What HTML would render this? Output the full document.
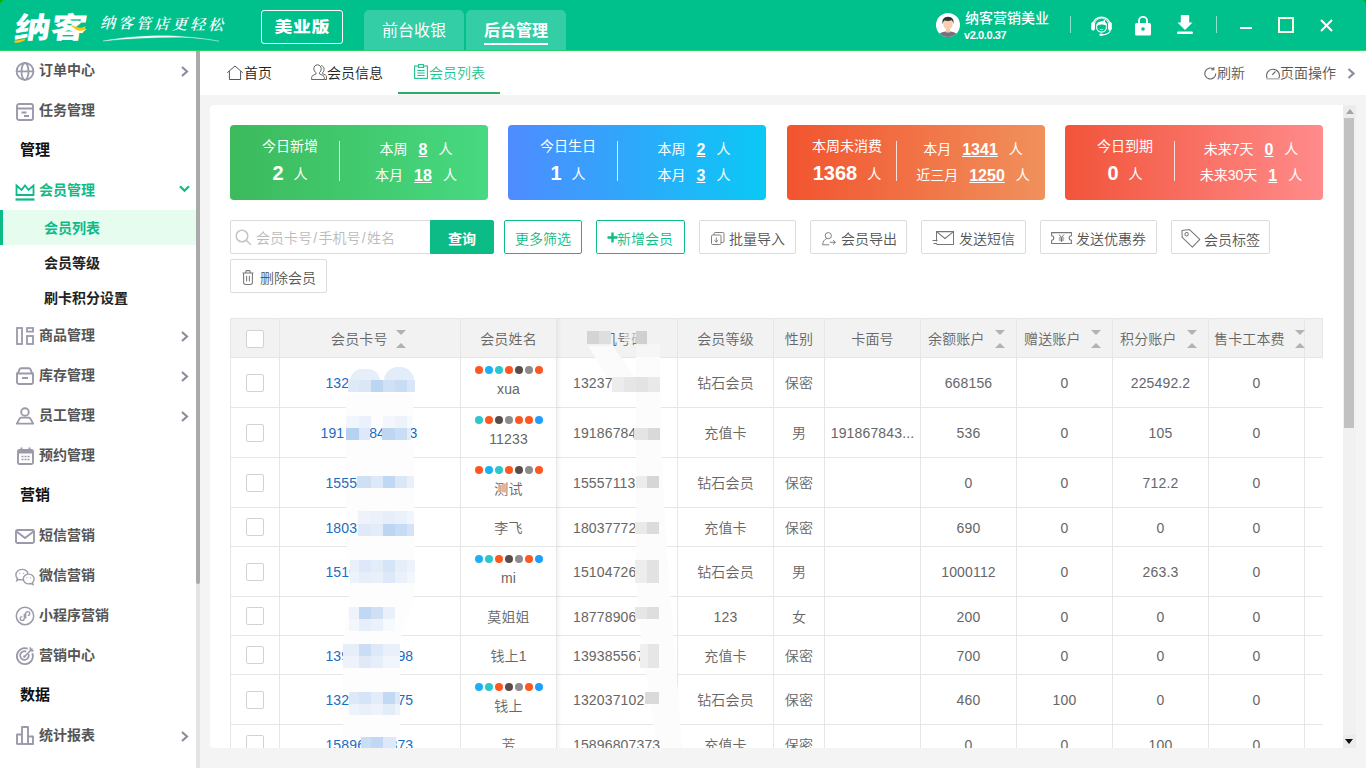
<!DOCTYPE html>
<html lang="zh-CN">
<head>
<meta charset="utf-8">
<title>纳客 - 会员列表</title>
<style>
*{box-sizing:border-box;margin:0;padding:0}
html,body{width:1366px;height:768px;overflow:hidden;background:#f4f4f4}
body{font-family:"Liberation Sans","Noto Sans CJK SC",sans-serif;font-size:14px;color:#666;position:relative;font-weight:350}
.abs{position:absolute}
svg{display:block;overflow:visible}
/* ---------- header ---------- */
#hd{position:absolute;z-index:5;left:0;top:0;width:1366px;height:51px;border-radius:5px 5px 0 0;background:#00c08c;border-bottom:1px solid #2bd06a}
#logo{position:absolute;left:15px;top:8px;width:58px;font-size:29px;line-height:40px;font-weight:900;color:#fff;letter-spacing:0;transform:scaleX(1.24) skewX(-7deg);transform-origin:0 50%;white-space:nowrap}
#slogan{position:absolute;left:100px;top:11px;font-size:15px;line-height:24px;color:#fff;font-style:italic;letter-spacing:3px;font-family:"Liberation Serif","Noto Serif CJK SC",serif;font-weight:600;transform:rotate(1deg);transform-origin:0 50%}
#ver{position:absolute;left:261px;top:10px;width:82px;height:34px;border:1px solid #fff;border-radius:3px;color:#fff;font-size:15px;font-weight:900;line-height:31px;text-align:center}
#ver b{display:inline-block;font-weight:900;transform:scaleX(1.190);letter-spacing:.5px}
.ttab{position:absolute;top:10px;height:40px;background:#33cda6;border-radius:5px 5px 0 0;color:#fff;font-size:16px;line-height:41px;text-align:center;font-weight:400}
#uname{position:absolute;left:965px;top:9px;color:#fff;font-size:14px;line-height:18px;font-weight:500}
#uver{position:absolute;left:964px;top:28px;color:#fff;font-size:11px;line-height:14px;letter-spacing:-0.4px;font-weight:700}
.vsep{position:absolute;top:16px;width:1px;height:17px;background:rgba(255,255,255,.55)}
/* ---------- sidebar ---------- */
#sb{position:absolute;left:0;top:50px;width:196px;height:718px;background:#fff;overflow:hidden}
#sbtrack{position:absolute;left:196px;top:51px;width:4px;height:717px;background:#e4e4e4}
#sbthumb{position:absolute;left:196px;top:51px;width:4px;height:533px;background:#aaa;border-radius:0 0 2px 2px}
.mi{position:absolute;left:0;width:196px;height:40px;line-height:40px;font-size:14px;font-weight:700;color:#555}
.mi .t{position:absolute;left:39px;top:0}
.mi svg.ic{position:absolute;left:15px;top:10px;transform:translateY(1px)}
.mi svg.ar{position:absolute;left:180px;top:16px}
.mh{position:absolute;left:20px;height:40px;line-height:40px;font-size:15px;font-weight:700;color:#111}
.si{position:absolute;left:0;width:196px;height:35px;line-height:37px;font-size:14px;font-weight:700;color:#222;padding-left:44px}
.si.on{background:#e6fcee;color:#0dbb86;border-left:3px solid #0dbb86;padding-left:41px}
/* ---------- tab bar ---------- */
#tb{position:absolute;left:200px;top:51px;width:1166px;height:44px;background:#fff}
.pt{position:absolute;top:0;height:44px;line-height:45px;font-size:14px;color:#222;white-space:nowrap}
.pt svg{position:absolute}
/* ---------- panel ---------- */
#pn{position:absolute;left:210px;top:105px;width:1146px;height:643px;background:#fff;border-radius:4px 0 0 4px;overflow:hidden}


/* ---------- cards ---------- */
.cd{position:absolute;top:20px;width:258px;height:75px;border-radius:4px;color:#fff;font-size:14px;font-weight:400}
.cd .l{position:absolute;left:0;width:120px;text-align:center;white-space:nowrap}
.cd .r{position:absolute;left:126px;width:120px;text-align:center;white-space:nowrap}
.cd .dv{position:absolute;left:109px;top:16px;width:1px;height:40px;background:rgba(255,255,255,.8)}
.cd b.n{font-size:20px;font-weight:700;margin-right:10px;vertical-align:-1px}
.cd b.u{font-size:16px;font-weight:700;text-decoration:underline;margin:0 11px;vertical-align:-1px}
/* ---------- toolbar ---------- */
.bt{position:absolute;height:34px;border:1px solid #dcdcdc;border-radius:2px;background:#fff;color:#555;font-size:14px;line-height:34px;white-space:nowrap}
.bt span{position:absolute;top:1px}
.bt u{text-decoration:none;padding:0 1.300px}
.bt svg{position:absolute}
.bt.g{border-color:#0dbb86;color:#0dbb86}
/* ---------- table ---------- */
.vl{position:absolute;width:1px;background:#e6e6e6}
.hl{position:absolute;height:1px;background:#e6e6e6}
.c{position:absolute;text-align:center;font-size:14px;color:#666;white-space:nowrap;line-height:20px;height:20px;letter-spacing:.150px}
.c.b{color:#1a6dc2}
.ck{position:absolute;left:36px;width:18px;height:18px;border:1px solid #d2d2d2;border-radius:2px;background:#fff}
.dots{position:absolute;left:265px;width:68px;height:8px}
.dots i{position:absolute;top:0;width:8px;height:8px;border-radius:50%}
.so{position:absolute;width:10px;height:18px}
.so:before,.so:after{content:"";position:absolute;left:0;border:5px solid transparent}
.so:before{top:0;border-top-color:#b2b2b2;border-bottom-width:0}
.so:after{top:13px;border-bottom-color:#b2b2b2;border-top-width:0}
.mz{position:absolute}

</style>
</head>
<body>
<i class="abs" style="left:0;top:0;width:6px;height:6px;background:#00b400;z-index:4"></i><i class="abs" style="left:1360px;top:0;width:6px;height:6px;background:#00b400;z-index:4"></i>
<div id="hd">
  <div id="logo">纳客</div>
  <div id="slogan">纳客管店更轻松</div>
  <svg class="abs" style="left:12px;top:20px" width="80" height="26" viewBox="0 0 80 26"><path d="M2.500 20.500c4 .2 8-1 11-2.500l-1.200 2.800c-3 1.400-6.500 2.300-9.800 2z" fill="#ffc20e"/><path d="M58 5c4 .2 6.500 2.600 10 2.700 2 0 4-.6 5.500-1.500l-.5 3.500c-2 1-4 1.300-6 1-3.500-.5-5.500-3.500-9-5.700z" fill="#ffc20e"/></svg>
  <svg class="abs" style="left:102px;top:34px" width="120" height="9" viewBox="0 0 120 9"><path d="M1 7C25 2.500 55 1 75 2.200 92 3.300 105 5 117 7.200 100 4.300 90 3.400 75 3.300 50 3.300 25 4.500 1 7z" fill="#fff" stroke="#fff" stroke-width=".3"/></svg>
  <div id="ver"><b>美业版</b></div>
  <div class="ttab" style="left:364px;width:100px">前台收银</div>
  <div class="ttab" style="left:466px;width:100px;font-weight:700">后台管理<i class="abs" style="left:18px;top:33px;width:64px;height:2px;background:#fff"></i></div>
  <div id="uname">纳客营销美业</div>
  <div id="uver">v2.0.0.37</div>
  <svg class="abs" style="left:936px;top:13px" width="24" height="24" viewBox="0 0 24 24"><defs><clipPath id="avc"><circle cx="12" cy="12" r="12"/></clipPath></defs><circle cx="12" cy="12" r="12" fill="#fff"/><g clip-path="url(#avc)"><path d="M2.500 24c0-4 3.500-5.600 9.500-5.600s9.500 1.600 9.500 5.600z" fill="#77707f"/><rect x="10" y="15" width="4" height="4.500" fill="#f2c6a5"/><ellipse cx="12" cy="11.200" rx="4.700" ry="5.400" fill="#f7cfb0"/><path d="M6.600 11.200c-.9-4.600 1.300-7.400 5.400-7.400 4.300 0 6.200 2.800 5.400 7.400-.3-2-1-3.300-1.800-3.900-1.900.7-5 .8-7 .100-.900.700-1.700 1.900-2 3.800z" fill="#333"/></g></svg>
  <svg class="abs" style="left:1091px;top:14px" width="21" height="22" viewBox="0 0 21 22" fill="none" stroke="#fff"><path d="M1.600 11A9 9.300 0 0 1 19.400 11" stroke-width="1.300"/><path d="M3.300 10.500A7.300 7.600 0 0 1 17.700 10.500" stroke-width=".9" opacity=".9"/><rect x="0.200" y="8" width="3.700" height="8.400" rx="1.700" fill="#fff" stroke="none"/><rect x="17.100" y="8" width="3.700" height="8.400" rx="1.700" fill="#fff" stroke="none"/><path d="M5.100 13c-.3-3.400 1.700-5.400 5-5.600 1.500-.1 2.900-.7 3.900-1.900.4 1 .3 1.800-.1 2.500 1.500.8 2.300 2.400 2.100 4.700-1.300-1.900-3.300-2.500-5.700-2.200-2.200.3-4.100 1-5.200 2.500z" fill="#fff" stroke="none"/><path d="M5.500 12.600c0 3.300 2.100 5.600 5 5.600s5-2.300 5-5.600" stroke-width="1.200"/><path d="M8.800 15.300q1.700 1 3.400 0" stroke-width=".9"/><path d="M19.200 15.800c0 2.700-2.900 4.600-7.400 5" stroke-width="1.200"/><ellipse cx="10.200" cy="20.700" rx="1.900" ry="1.200" fill="#fff" stroke="none"/></svg>
  <svg class="abs" style="left:1135px;top:15px" width="16" height="21" viewBox="0 0 16 21"><path d="M4 9V5.800a4 4 0 0 1 8 0V9" fill="none" stroke="#fff" stroke-width="1.800"/><path d="M1.500 8h13a1.500 1.500 0 0 1 1.500 1.500v9.500a1.500 1.500 0 0 1-1.500 1.500h-13A1.500 1.500 0 0 1 0 19V9.500A1.500 1.500 0 0 1 1.500 8z" fill="#fff"/><circle cx="8" cy="14" r="1.800" fill="#00c08c"/></svg>
  <svg class="abs" style="left:1177px;top:15px" width="16" height="19" viewBox="0 0 16 19" fill="#fff"><path d="M4.600 0h6.800a.8.800 0 0 1 .8.800V7.500h3.300L8 15 .5 7.500h3.300V.8A.8.800 0 0 1 4.600 0z"/><rect x="0" y="16.600" width="16" height="2.400" rx="1.200"/></svg>
  <i class="abs" style="left:1240px;top:27px;width:12px;height:2px;background:#fff"></i>
  <i class="abs" style="left:1278px;top:17px;width:16px;height:16px;border:2px solid #ffffe0"></i>
  <svg class="abs" style="left:1320px;top:19px" width="13" height="13" viewBox="0 0 13 13" stroke="#fff" stroke-width="2" fill="none"><path d="M1 1l11 11M12 1L1 12"/></svg>
  <i class="vsep" style="left:1070px"></i>
  <i class="vsep" style="left:1216px"></i>
</div>

<div id="sb">
  <div class="mi" style="top:0">
    <svg class="ic" style="left:15px;top:10px" width="20" height="20" viewBox="0 0 20 20" fill="none" stroke="#9a9aab" stroke-width="1.8"><circle cx="10" cy="10.400" r="8.400"/><ellipse cx="10" cy="10.400" rx="3.500" ry="8.400"/><path d="M1.600 10.400h16.800"/></svg>
    <span class="t">订单中心</span>
    <svg class="ar" width="9" height="11" viewBox="0 0 9 11" fill="none" stroke="#8c8c9c" stroke-width="2.200"><path d="M2 1l5 4.5L2 10"/></svg>
  </div>
  <div class="mi" style="top:40px">
    <svg class="ic" style="left:16px;top:12px" width="18" height="18" viewBox="0 0 18 18" fill="none" stroke="#9a9aab" stroke-width="1.9"><rect x="1" y="1" width="16" height="16" rx="2"/><path d="M1 5.5h16M5.5 9.5h5M8 13h5" /></svg>
    <span class="t">任务管理</span>
  </div>
  <div class="mh" style="top:80px">管理</div>
  <div class="mi" style="top:120px;color:#0dbb86">
    <svg class="ic" style="left:15px;top:13px" width="20" height="17" viewBox="0 0 20 17" fill="none" stroke="#0dbb86" stroke-width="1.8"><path d="M1.5 1.5l5 4.5L10 1.5 13.5 6l5-4.5V11h-17z" stroke-linejoin="miter"/><path d="M0.5 15.5h19" stroke-width="2.2"/></svg>
    <span class="t">会员管理</span>
    <svg class="ar" style="left:179px;top:15px" width="11" height="8" viewBox="0 0 11 8" fill="none" stroke="#0dbb86" stroke-width="2.2"><path d="M1 1.2l4.5 4.6L10 1.2"/></svg>
  </div>
  <div class="si on" style="top:160px">会员列表</div>
  <div class="si" style="top:195px">会员等级</div>
  <div class="si" style="top:230px">刷卡积分设置</div>
  <div class="mi" style="top:265px">
    <svg class="ic" style="left:16px;top:11px" width="18" height="18" viewBox="0 0 18 18" fill="none" stroke="#9a9aab" stroke-width="1.8"><rect x="1" y="1" width="5" height="16"/><rect x="11" y="1" width="6" height="3.6"/><rect x="11" y="9" width="6" height="8"/></svg>
    <span class="t">商品管理</span>
    <svg class="ar" width="9" height="11" viewBox="0 0 9 11" fill="none" stroke="#8c8c9c" stroke-width="2.200"><path d="M2 1l5 4.5L2 10"/></svg>
  </div>
  <div class="mi" style="top:305px">
    <svg class="ic" style="left:16px;top:11px" width="18" height="18" viewBox="0 0 18 18" fill="none" stroke="#9a9aab" stroke-width="1.9"><path d="M1 6.5h16v8.5a2 2 0 0 1-2 2H3a2 2 0 0 1-2-2z"/><path d="M2 6.2l1.6-4a1.6 1.6 0 0 1 1.5-1h7.8a1.6 1.6 0 0 1 1.5 1l1.6 4"/><path d="M6 11h6" stroke-width="2"/></svg>
    <span class="t">库存管理</span>
    <svg class="ar" width="9" height="11" viewBox="0 0 9 11" fill="none" stroke="#8c8c9c" stroke-width="2.200"><path d="M2 1l5 4.5L2 10"/></svg>
  </div>
  <div class="mi" style="top:345px">
    <svg class="ic" style="left:16px;top:11px" width="18" height="18" viewBox="0 0 18 18" fill="none" stroke="#9a9aab" stroke-width="1.9"><circle cx="9" cy="5" r="3.8"/><path d="M0.8 16.6l3-5.2a1.6 1.6 0 0 1 1.4-.8h7.6a1.6 1.6 0 0 1 1.4.8l3 5.2z" stroke-linejoin="round"/></svg>
    <span class="t">员工管理</span>
    <svg class="ar" width="9" height="11" viewBox="0 0 9 11" fill="none" stroke="#8c8c9c" stroke-width="2.200"><path d="M2 1l5 4.5L2 10"/></svg>
  </div>
  <div class="mi" style="top:385px">
    <svg class="ic" style="left:17px;top:11px" width="17" height="18" viewBox="0 0 17 18" fill="none" stroke="#9a9aab" stroke-width="1.9"><rect x="1" y="3" width="15" height="14" rx="1.5"/><path d="M1 5h15" stroke-width="3"/><path d="M4.5 0.5v3M12.500.5v3"/><path d="M4.500 9.500h2M7.500 9.500h2M10.500 9.500h2M4.500 12.500h2M7.500 12.500h2M10.500 12.500h2" stroke-width="1.6"/></svg>
    <span class="t">预约管理</span>
  </div>
  <div class="mh" style="top:425px">营销</div>
  <div class="mi" style="top:465px">
    <svg class="ic" style="left:15px;top:13px" width="20" height="15" viewBox="0 0 20 15" fill="none" stroke="#9a9aab" stroke-width="1.9"><rect x="1" y="1" width="18" height="13" rx="1.5"/><path d="M1.500 2.500L10 9l8.500-6.500"/></svg>
    <span class="t">短信营销</span>
  </div>
  <div class="mi" style="top:505px">
    <svg class="ic" style="left:15px;top:12px" width="20" height="17" viewBox="0 0 20 17" fill="none" stroke="#9a9aab" stroke-width="1.4"><path d="M8.200 11.800c-.5.100-1 .1-1.500.1-1 0-1.900-.2-2.700-.5L1.800 12.600l.6-2.100C1.500 9.600.9 8.400.9 7 .9 3.900 3.600 1.400 7 1.400c3 0 5.500 1.900 6 4.500"/><path d="M19.100 11c0-2.700-2.400-4.900-5.400-4.900S8.300 8.300 8.300 11s2.400 4.900 5.400 4.900c.8 0 1.500-.1 2.200-.4l2.100 1-.5-1.900c1-.9 1.600-2.100 1.600-3.600z" fill="#fff"/><circle cx="4.800" cy="5.300" r=".6" fill="#9a9aab" stroke="none"/><circle cx="8.600" cy="5.300" r=".6" fill="#9a9aab" stroke="none"/><circle cx="11.800" cy="9.800" r=".6" fill="#9a9aab" stroke="none"/><circle cx="15.400" cy="9.800" r=".6" fill="#9a9aab" stroke="none"/></svg>
    <span class="t">微信营销</span>
  </div>
  <div class="mi" style="top:545px">
    <svg class="ic" style="left:15px;top:10px" width="20" height="20" viewBox="0 0 20 20" fill="none" stroke="#9a9aab" stroke-width="1.5"><circle cx="10" cy="10" r="8.700"/><path d="M10.700 7.800c0-1.300 1-2.200 2.100-2.200s2 .8 2 1.900-.9 1.900-2 1.900M9.300 12.200c0 1.300-1 2.200-2.100 2.200s-2-.8-2-1.900.9-1.900 2-1.900M9.300 12.400V7.600M10.700 7.600v4.800" stroke-width="1.300"/></svg>
    <span class="t">小程序营销</span>
  </div>
  <div class="mi" style="top:585px">
    <svg class="ic" style="left:15px;top:9px" width="20" height="21" viewBox="0 0 20 21" fill="none" stroke="#9a9aab" stroke-width="1.800"><path d="M17.300 8.200a8 8 0 1 1-4.500-4.500"/><path d="M13.400 8.800a4.300 4.300 0 1 1-2.200-2.200"/><circle cx="9.400" cy="11.600" r="1.300" fill="#9a9aab" stroke="none"/><path d="M9.800 11.200L17.500 3.500M15.300 2.300v3.400h3.400" stroke-width="1.500"/></svg>
    <span class="t">营销中心</span>
  </div>
  <div class="mh" style="top:625px">数据</div>
  <div class="mi" style="top:665px">
    <svg class="ic" style="left:16px;top:10px" width="18" height="19" viewBox="0 0 18 19" fill="none" stroke="#9a9aab" stroke-width="1.900"><path d="M1 18V8.500h5V18M6 18V1h6v17M12 18v-7.500h5V18z" stroke-linejoin="round"/><path d="M0.500 18h17"/></svg>
    <span class="t">统计报表</span>
    <svg class="ar" width="9" height="11" viewBox="0 0 9 11" fill="none" stroke="#8c8c9c" stroke-width="2.200"><path d="M2 1l5 4.500L2 10"/></svg>
  </div>
  <div class="mi" style="top:706px;opacity:.55">
    <svg class="ic" style="left:16px;top:11px" width="18" height="18" viewBox="0 0 18 18" fill="none" stroke="#9a9aab" stroke-width="1.900"><rect x="1" y="1" width="16" height="16" rx="2"/></svg>
  </div>
</div>
<div id="sbtrack"></div><div id="sbthumb"></div>

<div id="tb">
  <div class="pt" style="left:27px">
    <svg style="left:0;top:13px" width="17" height="17" viewBox="0 0 17 17" fill="none" stroke="#555" stroke-width="1"><path d="M0.300 8.700L8 2l7.700 6.700M2.400 7.200V15.500h11.200V7.200"/></svg>
    <span style="margin-left:17px">首页</span>
  </div>
  <div class="pt" style="left:111px">
    <svg style="left:0;top:13px" width="16" height="17" viewBox="0 0 16 17" fill="none" stroke="#555" stroke-width=".9"><path d="M6.500 0.800c2.200 0 3.700 1.700 3.700 4 0 1.600-.7 3-1.800 3.800v1.200l3.600 1.700c.8.400 1.300 1.200 1.300 2.100v1.900H0.600v-1.900c0-.9.500-1.700 1.300-2.100l3.200-1.600V8.700C3.800 7.900 2.800 6.400 2.800 4.800c0-2.300 1.500-4 3.700-4z"/><path d="M10.300 1.600c1.700.3 2.800 1.800 2.800 3.700 0 1.400-.6 2.600-1.500 3.300v1l2.800 1.400c.7.300 1.100 1 1.100 1.800v2.700h-2"/></svg>
    <span style="margin-left:16px">会员信息</span>
  </div>
  <div class="pt" style="left:214px;color:#1fc38f">
    <svg style="left:0;top:13px" width="14" height="15" viewBox="0 0 14 15" fill="none" stroke="#1fc38f" stroke-width="1.100"><rect x="0.600" y="2" width="12.800" height="12.400"/><rect x="4.500" y="0.600" width="5" height="2.800" fill="#fff"/><path d="M3.300 6.500h7.400M3.300 9h7.400M3.300 11.500h7.400"/></svg>
    <span style="margin-left:15px">会员列表</span>
  </div>
  <i class="abs" style="left:198px;top:41px;width:102px;height:2px;background:#27b062"></i>
  <div class="pt" style="left:1004px;color:#555">
    <svg style="left:0;top:16px" width="13" height="13" viewBox="0 0 13 13" fill="none" stroke="#666" stroke-width="1.100"><path d="M11.800 6.500a5.500 5.500 0 1 1-2.200-4.400"/><path d="M9.800 0.300v2.500H7.300" /></svg>
    <span style="margin-left:13px">刷新</span>
  </div>
  <div class="pt" style="left:1066px;color:#555">
    <svg style="left:0;top:16px" width="14" height="13" viewBox="0 0 14 13" fill="none" stroke="#666" stroke-width="1.100"><path d="M1.200 11.300A6.400 6.400 0 1 1 12.800 11.300"/><path d="M0.500 11.800h13" stroke="#bbb" stroke-width="1.600"/><path d="M6.200 7.800l3.300-3.300"/></svg>
    <span style="margin-left:14px">页面操作</span>
  </div>
  <svg class="abs" style="left:1147px;top:17px" width="9" height="11" viewBox="0 0 9 11" fill="none" stroke="#8c8c9c" stroke-width="2.200"><path d="M1.500 1l5 4.500-5 4.500"/></svg>
</div>

<div id="pn">
<div class="cd" style="left:20px;background:linear-gradient(90deg,#3cba5c,#47d981)"><div class="l" style="top:11px;line-height:20px">今日新增</div><div class="l" style="top:34px;line-height:28px"><b class="n">2</b>人</div><i class="dv"></i><div class="r" style="top:13px;line-height:22px">本周<b class="u">8</b>人</div><div class="r" style="top:39px;line-height:22px">本月<b class="u">18</b>人</div></div>
<div class="cd" style="left:298px;background:linear-gradient(90deg,#4f8bff,#0ac9f5)"><div class="l" style="top:11px;line-height:20px">今日生日</div><div class="l" style="top:34px;line-height:28px"><b class="n">1</b>人</div><i class="dv"></i><div class="r" style="top:13px;line-height:22px">本周<b class="u">2</b>人</div><div class="r" style="top:39px;line-height:22px">本月<b class="u">3</b>人</div></div>
<div class="cd" style="left:577px;background:linear-gradient(90deg,#f2542f,#f0915c)"><div class="l" style="top:11px;line-height:20px">本周未消费</div><div class="l" style="top:34px;line-height:28px"><b class="n">1368</b>人</div><i class="dv"></i><div class="r" style="top:13px;line-height:22px">本月<b class="u">1341</b>人</div><div class="r" style="top:39px;line-height:22px">近三月<b class="u">1250</b>人</div></div>
<div class="cd" style="left:855px;background:linear-gradient(90deg,#f2543a,#ff8b8b)"><div class="l" style="top:11px;line-height:20px">今日到期</div><div class="l" style="top:34px;line-height:28px"><b class="n">0</b>人</div><i class="dv"></i><div class="r" style="top:13px;line-height:22px">未来7天<b class="u">0</b>人</div><div class="r" style="top:39px;line-height:22px">未来30天<b class="u">1</b>人</div></div>
<div class="bt" style="left:20px;top:115px;width:201px;border-radius:2px 0 0 2px;color:#bbb"><svg style="left:4px;top:8px" width="17" height="17" viewBox="0 0 17 17" fill="none" stroke="#c4c4c4" stroke-width="1.500"><circle cx="7" cy="7" r="5.800"/><path d="M11.200 11.200l4.600 4.600"/></svg><span style="left:25px;top:0">会员卡号<u>/</u>手机号<u>/</u>姓名</span></div>
<div class="bt" style="left:220px;top:115px;width:64px;border-color:#0dbb86;background:#0dbb86;color:#fff;font-weight:700;text-align:center;border-radius:0 2px 2px 0"><span style="left:17px">查询</span></div>
<div class="bt g" style="left:294px;top:115px;width:78px"><span style="left:10px">更多筛选</span></div>
<div class="bt g" style="left:386px;top:115px;width:89px"><svg style="left:10px;top:11px" width="11" height="11" viewBox="0 0 11 11" fill="none" stroke="#0dbb86" stroke-width="2.400"><path d="M5.500 0.500v10M0.500 5.500h10"/></svg><span style="left:20px">新增会员</span></div>
<div class="bt" style="left:489px;top:115px;width:97px"><svg style="left:11px;top:11px" width="14" height="14" viewBox="0 0 14 14" fill="none" stroke="#808080" stroke-width="1"><rect x="0.500" y="3" width="9.500" height="9.500" rx="1.200"/><path d="M3 3v-1.300a1.200 1.200 0 0 1 1.200-1.200h7.600a1.200 1.200 0 0 1 1.200 1.200v7.600a1.200 1.200 0 0 1-1.200 1.200h-1.800"/><path d="M5.250 5.500v4.500M3.300 8.200l1.950 1.900 1.950-1.900"/></svg><span style="left:29px">批量导入</span></div>
<div class="bt" style="left:600px;top:115px;width:97px"><svg style="left:11px;top:11px" width="15" height="14" viewBox="0 0 15 14" fill="none" stroke="#808080" stroke-width="1"><circle cx="6.300" cy="3.700" r="3.100"/><path d="M4.600 6.600c-2.300 1-3.800 3-4 6.200h6.600"/><path d="M7.800 10.300h5.600M11 8.100l2.400 2.200-2.400 2.200"/></svg><span style="left:30px">会员导出</span></div>
<div class="bt" style="left:711px;top:115px;width:105px"><svg style="left:10px;top:10px" width="22" height="14" viewBox="0 0 22 14" fill="none" stroke="#777" stroke-width="1.050"><path d="M4.500 10.500V0.600h17v12.800h-17"/><path d="M4.800 0.900l8.200 6.600 8.200-6.600"/><path d="M0.500 9.500h5M1.500 12.500h3.500"/></svg><span style="left:37px">发送短信</span></div>
<div class="bt" style="left:830px;top:115px;width:117px"><svg style="left:10px;top:11px" width="21" height="12" viewBox="0 0 21 12" fill="none" stroke="#777" stroke-width="1.050"><path d="M0.600 0.600h19.800v3.200a2.200 2.200 0 0 0 0 4.400v3.200H0.600V8.200a2.200 2.200 0 0 0 0-4.400z"/><path d="M8 2.500l2.500 3 2.500-3M10.500 5.500v4.500M7.800 6h5.400M7.800 8h5.400" stroke-width="1"/></svg><span style="left:35px">发送优惠券</span></div>
<div class="bt" style="left:961px;top:115px;width:99px"><svg style="left:9px;top:8px" width="20" height="19" viewBox="0 0 20 19" fill="none" stroke="#777" stroke-width="1.050"><path d="M1 1.500l7.500-.9 10.300 9.800-7.400 7.800L1.200 8.400z" stroke-linejoin="round"/><circle cx="5.600" cy="5.200" r="1.700"/></svg><span style="left:32px;top:2px">会员标签</span></div>
<div class="bt" style="left:20px;top:154px;width:97px"><svg style="left:11px;top:10px" width="12" height="15" viewBox="0 0 12 15" fill="none" stroke="#777" stroke-width="1.050"><path d="M0.500 3h11M3.800 2.800V1.600a1 1 0 0 1 1-1h2.400a1 1 0 0 1 1 1v1.200M1.600 3.200v9a2.200 2.200 0 0 0 2.200 2.200h4.400a2.200 2.200 0 0 0 2.200-2.200v-9M4.600 6v5.500M7.400 6v5.500"/></svg><span style="left:29px">删除会员</span></div>
<div class="abs" style="left:20px;top:213px;width:1093px;height:39px;background:#f2f2f2"></div>
<i class="hl" style="left:20px;top:213px;width:1093px"></i>
<i class="hl" style="left:20px;top:252px;width:1093px"></i>
<i class="hl" style="left:20px;top:302px;width:1093px"></i>
<i class="hl" style="left:20px;top:352px;width:1093px"></i>
<i class="hl" style="left:20px;top:402px;width:1093px"></i>
<i class="hl" style="left:20px;top:441px;width:1093px"></i>
<i class="hl" style="left:20px;top:491px;width:1093px"></i>
<i class="hl" style="left:20px;top:530px;width:1093px"></i>
<i class="hl" style="left:20px;top:569px;width:1093px"></i>
<i class="hl" style="left:20px;top:619px;width:1093px"></i>
<i class="vl" style="left:20px;top:213px;height:430px"></i>
<i class="vl" style="left:69px;top:213px;height:430px"></i>
<i class="vl" style="left:250px;top:213px;height:430px"></i>
<i class="vl" style="left:346px;top:213px;height:430px"></i>
<i class="vl" style="left:467px;top:213px;height:430px"></i>
<i class="vl" style="left:563px;top:213px;height:430px"></i>
<i class="vl" style="left:614px;top:213px;height:430px"></i>
<i class="vl" style="left:710px;top:213px;height:430px"></i>
<i class="vl" style="left:806px;top:213px;height:430px"></i>
<i class="vl" style="left:902px;top:213px;height:430px"></i>
<i class="vl" style="left:998px;top:213px;height:430px"></i>
<i class="vl" style="left:1094px;top:213px;height:430px"></i>
<i class="vl" style="left:1112px;top:213px;height:40px"></i>
<i class="abs" style="left:347px;top:213px;width:5px;height:430px;background:linear-gradient(90deg,rgba(0,0,0,.045),rgba(0,0,0,0))"></i>
<svg class="mz" style="left:0;top:0" width="1133" height="643"><polygon points="136,289 136,435 139,455 139,495 133,535 133,643 190,643 190,535 203,497 205,455 203,289" fill="#fdfdfe"/></svg>
<svg class="mz" style="left:0;top:0" width="1133" height="643"><polygon points="426,252 426,455 431,535 447,643 472,643 464,535 456,435 451,335 450,252" fill="#fcfcfc"/></svg>
<svg class="mz" style="left:0;top:0" width="1133" height="643"><polygon points="377,239 401,239 426,273 426,287 406,287" fill="#fbfbfb"/></svg>
<svg class="mz" style="left:0;top:0" width="1133" height="643"><polygon points="426,239 450,239 450,252 426,252" fill="#f6f6f6"/></svg>
<i class="ck" style="top:225px"></i>
<div class="c" style="left:121px;top:224px;width:56px">会员卡号</div>
<i class="so" style="left:186.2px;top:225px"></i>
<div class="c " style="left:251px;top:223.5px;width:95px">会员姓名</div>
<div class="c " style="left:347px;top:223.5px;width:120px">手机号码</div>
<div class="c " style="left:468px;top:223.5px;width:95px">会员等级</div>
<div class="c " style="left:564px;top:223.5px;width:50px">性别</div>
<div class="c " style="left:615px;top:223.5px;width:95px">卡面号</div>
<div class="c" style="left:718px;top:224px;width:56px">余额账户</div>
<i class="so" style="left:784.6px;top:225px"></i>
<div class="c" style="left:814px;top:224px;width:56px">赠送账户</div>
<i class="so" style="left:880.5999999999999px;top:225px"></i>
<div class="c" style="left:910px;top:224px;width:56px">积分账户</div>
<i class="so" style="left:976.5999999999999px;top:225px"></i>
<div class="c" style="left:1004px;top:224px;width:70px">售卡工本费</div>
<i class="so" style="left:1084.8px;top:225px"></i>
<i class="ck" style="top:268.5px"></i>
<div class="c b" style="left:115.39999999999998px;top:268.0px;text-align:left">1323</div>
<div class="dots" style="top:261px"><i style="left:0px;background:#ff5722"></i><i style="left:10px;background:#1ab1f5"></i><i style="left:20px;background:#2ec7c9"></i><i style="left:30px;background:#ff5722"></i><i style="left:40px;background:#5b4c4c"></i><i style="left:50px;background:#8c8c8c"></i><i style="left:60px;background:#ff5722"></i></div>
<div class="c" style="left:251px;top:274px;width:95px">xua</div>
<div class="c" style="left:363px;top:268.0px;width:100px;text-align:left">13237</div>
<div class="c " style="left:468px;top:268.0px;width:95px">钻石会员</div>
<div class="c " style="left:564px;top:268.0px;width:50px">保密</div>
<div class="c " style="left:711px;top:268.0px;width:95px">668156</div>
<div class="c " style="left:807px;top:268.0px;width:95px">0</div>
<div class="c " style="left:903px;top:268.0px;width:95px">225492.2</div>
<div class="c " style="left:999px;top:268.0px;width:95px">0</div>
<i class="ck" style="top:318.5px"></i>
<div class="c b" style="left:110.5px;top:318.0px;text-align:left">191</div>
<div class="c b" style="left:159.2px;top:318.0px;text-align:left">84</div>
<div class="c b" style="left:199.39999999999998px;top:318.0px;text-align:left">3</div>
<div class="dots" style="top:311px"><i style="left:0px;background:#2ec7c9"></i><i style="left:10px;background:#ff5722"></i><i style="left:20px;background:#5b4c4c"></i><i style="left:30px;background:#8c8c8c"></i><i style="left:40px;background:#ff5722"></i><i style="left:50px;background:#ff5722"></i><i style="left:60px;background:#1e9fff"></i></div>
<div class="c" style="left:251px;top:324px;width:95px">11233</div>
<div class="c" style="left:363px;top:318.0px;width:100px;text-align:left">19186784</div>
<div class="c " style="left:468px;top:318.0px;width:95px">充值卡</div>
<div class="c " style="left:564px;top:318.0px;width:50px">男</div>
<div class="c " style="left:615px;top:318.0px;width:95px">191867843...</div>
<div class="c " style="left:711px;top:318.0px;width:95px">536</div>
<div class="c " style="left:807px;top:318.0px;width:95px">0</div>
<div class="c " style="left:903px;top:318.0px;width:95px">105</div>
<div class="c " style="left:999px;top:318.0px;width:95px">0</div>
<i class="ck" style="top:368.5px"></i>
<div class="c b" style="left:115.39999999999998px;top:368.0px;text-align:left">1555</div>
<div class="dots" style="top:361px"><i style="left:0px;background:#ff5722"></i><i style="left:10px;background:#1ab1f5"></i><i style="left:20px;background:#2ec7c9"></i><i style="left:30px;background:#ff5722"></i><i style="left:40px;background:#5b4c4c"></i><i style="left:50px;background:#8c8c8c"></i><i style="left:60px;background:#ff5722"></i></div>
<div class="c" style="left:251px;top:374px;width:95px">测试</div>
<div class="c" style="left:363px;top:368.0px;width:100px;text-align:left">15557113</div>
<div class="c " style="left:468px;top:368.0px;width:95px">钻石会员</div>
<div class="c " style="left:564px;top:368.0px;width:50px">保密</div>
<div class="c " style="left:711px;top:368.0px;width:95px">0</div>
<div class="c " style="left:807px;top:368.0px;width:95px">0</div>
<div class="c " style="left:903px;top:368.0px;width:95px">712.2</div>
<div class="c " style="left:999px;top:368.0px;width:95px">0</div>
<i class="ck" style="top:413.0px"></i>
<div class="c b" style="left:115.39999999999998px;top:412.5px;text-align:left">18037</div>
<div class="c " style="left:251px;top:412.5px;width:95px">李飞</div>
<div class="c" style="left:363px;top:412.5px;width:100px;text-align:left">18037772</div>
<div class="c " style="left:468px;top:412.5px;width:95px">充值卡</div>
<div class="c " style="left:564px;top:412.5px;width:50px">保密</div>
<div class="c " style="left:711px;top:412.5px;width:95px">690</div>
<div class="c " style="left:807px;top:412.5px;width:95px">0</div>
<div class="c " style="left:903px;top:412.5px;width:95px">0</div>
<div class="c " style="left:999px;top:412.5px;width:95px">0</div>
<i class="ck" style="top:457.5px"></i>
<div class="c b" style="left:115.39999999999998px;top:457.0px;text-align:left">1510</div>
<div class="dots" style="top:450px"><i style="left:0px;background:#1ab1f5"></i><i style="left:10px;background:#2ec7c9"></i><i style="left:20px;background:#ff5722"></i><i style="left:30px;background:#5b4c4c"></i><i style="left:40px;background:#8c8c8c"></i><i style="left:50px;background:#ff5722"></i><i style="left:60px;background:#1e9fff"></i></div>
<div class="c" style="left:251px;top:463px;width:95px">mi</div>
<div class="c" style="left:363px;top:457.0px;width:100px;text-align:left">15104726</div>
<div class="c " style="left:468px;top:457.0px;width:95px">钻石会员</div>
<div class="c " style="left:564px;top:457.0px;width:50px">男</div>
<div class="c " style="left:711px;top:457.0px;width:95px">1000112</div>
<div class="c " style="left:807px;top:457.0px;width:95px">0</div>
<div class="c " style="left:903px;top:457.0px;width:95px">263.3</div>
<div class="c " style="left:999px;top:457.0px;width:95px">0</div>
<i class="ck" style="top:502.0px"></i>
<div class="c " style="left:251px;top:501.5px;width:95px">莫姐姐</div>
<div class="c" style="left:363px;top:501.5px;width:100px;text-align:left">18778906</div>
<div class="c " style="left:468px;top:501.5px;width:95px">123</div>
<div class="c " style="left:564px;top:501.5px;width:50px">女</div>
<div class="c " style="left:711px;top:501.5px;width:95px">200</div>
<div class="c " style="left:807px;top:501.5px;width:95px">0</div>
<div class="c " style="left:903px;top:501.5px;width:95px">0</div>
<div class="c " style="left:999px;top:501.5px;width:95px">0</div>
<i class="ck" style="top:541.0px"></i>
<div class="c b" style="left:115.39999999999998px;top:540.5px;text-align:left">139</div>
<div class="c b" style="left:187.39999999999998px;top:540.5px;text-align:left">98</div>
<div class="c " style="left:251px;top:540.5px;width:95px">钱上1</div>
<div class="c" style="left:363px;top:540.5px;width:100px;text-align:left">139385567</div>
<div class="c " style="left:468px;top:540.5px;width:95px">充值卡</div>
<div class="c " style="left:564px;top:540.5px;width:50px">保密</div>
<div class="c " style="left:711px;top:540.5px;width:95px">700</div>
<div class="c " style="left:807px;top:540.5px;width:95px">0</div>
<div class="c " style="left:903px;top:540.5px;width:95px">0</div>
<div class="c " style="left:999px;top:540.5px;width:95px">0</div>
<i class="ck" style="top:585.5px"></i>
<div class="c b" style="left:115.39999999999998px;top:585.0px;text-align:left">132</div>
<div class="c b" style="left:187.39999999999998px;top:585.0px;text-align:left">75</div>
<div class="dots" style="top:578px"><i style="left:0px;background:#1ab1f5"></i><i style="left:10px;background:#2ec7c9"></i><i style="left:20px;background:#ff5722"></i><i style="left:30px;background:#5b4c4c"></i><i style="left:40px;background:#8c8c8c"></i><i style="left:50px;background:#ff5722"></i><i style="left:60px;background:#1e9fff"></i></div>
<div class="c" style="left:251px;top:591px;width:95px">钱上</div>
<div class="c" style="left:363px;top:585.0px;width:100px;text-align:left">132037102</div>
<div class="c " style="left:468px;top:585.0px;width:95px">钻石会员</div>
<div class="c " style="left:564px;top:585.0px;width:50px">保密</div>
<div class="c " style="left:711px;top:585.0px;width:95px">460</div>
<div class="c " style="left:807px;top:585.0px;width:95px">100</div>
<div class="c " style="left:903px;top:585.0px;width:95px">0</div>
<div class="c " style="left:999px;top:585.0px;width:95px">0</div>
<i class="ck" style="top:630.0px"></i>
<div class="c b" style="left:115.39999999999998px;top:629.5px;text-align:left">15896</div>
<div class="c b" style="left:179.5px;top:629.5px;text-align:left">373</div>
<div class="c " style="left:251px;top:629.5px;width:95px">芳</div>
<div class="c" style="left:363px;top:629.5px;width:100px;text-align:left">15896807373</div>
<div class="c " style="left:468px;top:629.5px;width:95px">充值卡</div>
<div class="c " style="left:564px;top:629.5px;width:50px">保密</div>
<div class="c " style="left:711px;top:629.5px;width:95px">0</div>
<div class="c " style="left:807px;top:629.5px;width:95px">0</div>
<div class="c " style="left:903px;top:629.5px;width:95px">100</div>
<div class="c " style="left:999px;top:629.5px;width:95px">0</div>
<i class="mz" style="left:140px;top:264px;width:30px;height:12px;background:#e6eef9;border-radius:14px 14px 0 0"></i>
<i class="mz" style="left:174px;top:262px;width:30px;height:14px;background:#e3ecf9;border-radius:14px 14px 0 0"></i>
<i class="mz" style="left:138px;top:275px;width:11px;height:12px;background:#dfeaf8;"></i>
<i class="mz" style="left:149px;top:275px;width:12px;height:12px;background:#dbe7f7;"></i>
<i class="mz" style="left:161px;top:275px;width:12px;height:12px;background:#bcd6f2;"></i>
<i class="mz" style="left:173px;top:275px;width:12px;height:12px;background:#d0e1f6;"></i>
<i class="mz" style="left:185px;top:275px;width:12px;height:12px;background:#c8dcf4;"></i>
<i class="mz" style="left:197px;top:275px;width:8px;height:12px;background:#d9e6f7;"></i>
<i class="mz" style="left:136px;top:311px;width:13px;height:12px;background:#f1f5fc;"></i>
<i class="mz" style="left:149px;top:311px;width:12px;height:12px;background:#eaf1fb;"></i>
<i class="mz" style="left:173px;top:311px;width:12px;height:12px;background:#f3f7fc;"></i>
<i class="mz" style="left:185px;top:311px;width:12px;height:12px;background:#eef3fb;"></i>
<i class="mz" style="left:197px;top:311px;width:5px;height:12px;background:#f6f9fd;"></i>
<i class="mz" style="left:136px;top:323px;width:13px;height:12px;background:#b5d2f1;"></i>
<i class="mz" style="left:149px;top:323px;width:11px;height:12px;background:#dde8f8;"></i>
<i class="mz" style="left:172px;top:323px;width:13px;height:12px;background:#bdd6f2;"></i>
<i class="mz" style="left:185px;top:323px;width:12px;height:12px;background:#c9ddf4;"></i>
<i class="mz" style="left:197px;top:323px;width:4px;height:12px;background:#e3ecf9;"></i>
<i class="mz" style="left:147px;top:371px;width:14px;height:12px;background:#cfe0f5;"></i>
<i class="mz" style="left:161px;top:371px;width:12px;height:12px;background:#dde9f8;"></i>
<i class="mz" style="left:173px;top:371px;width:12px;height:12px;background:#c0d8f3;"></i>
<i class="mz" style="left:185px;top:371px;width:12px;height:12px;background:#dbe7f7;"></i>
<i class="mz" style="left:197px;top:371px;width:7px;height:12px;background:#e9f0fa;"></i>
<i class="mz" style="left:148px;top:406px;width:13px;height:13px;background:#eef3fb;"></i>
<i class="mz" style="left:161px;top:406px;width:12px;height:13px;background:#eaf1fb;"></i>
<i class="mz" style="left:173px;top:406px;width:12px;height:13px;background:#e6eef9;"></i>
<i class="mz" style="left:185px;top:406px;width:12px;height:13px;background:#eaf1fb;"></i>
<i class="mz" style="left:197px;top:406px;width:7px;height:13px;background:#f1f5fc;"></i>
<i class="mz" style="left:148px;top:419px;width:13px;height:12px;background:#dfe9f8;"></i>
<i class="mz" style="left:161px;top:419px;width:12px;height:12px;background:#e3ecf9;"></i>
<i class="mz" style="left:173px;top:419px;width:12px;height:12px;background:#bcd5f2;"></i>
<i class="mz" style="left:185px;top:419px;width:12px;height:12px;background:#c6dbf4;"></i>
<i class="mz" style="left:197px;top:419px;width:7px;height:12px;background:#d4e3f6;"></i>
<i class="mz" style="left:140px;top:455px;width:9px;height:12px;background:#e9f0fa;"></i>
<i class="mz" style="left:149px;top:455px;width:12px;height:12px;background:#dde8f8;"></i>
<i class="mz" style="left:161px;top:455px;width:12px;height:12px;background:#e3ecf9;"></i>
<i class="mz" style="left:173px;top:455px;width:12px;height:12px;background:#d6e4f7;"></i>
<i class="mz" style="left:185px;top:455px;width:12px;height:12px;background:#e6eef9;"></i>
<i class="mz" style="left:197px;top:455px;width:8px;height:12px;background:#eef3fb;"></i>
<i class="mz" style="left:140px;top:467px;width:9px;height:11px;background:#eef3fb;"></i>
<i class="mz" style="left:149px;top:467px;width:12px;height:11px;background:#e6eef9;"></i>
<i class="mz" style="left:161px;top:467px;width:12px;height:11px;background:#e9f0fa;"></i>
<i class="mz" style="left:173px;top:467px;width:12px;height:11px;background:#dde8f8;"></i>
<i class="mz" style="left:185px;top:467px;width:12px;height:11px;background:#eaf1fb;"></i>
<i class="mz" style="left:197px;top:467px;width:8px;height:11px;background:#f3f7fc;"></i>
<i class="mz" style="left:139px;top:502px;width:10px;height:12px;background:#eef3fb;"></i>
<i class="mz" style="left:149px;top:502px;width:12px;height:12px;background:#c0d8f3;"></i>
<i class="mz" style="left:161px;top:502px;width:12px;height:12px;background:#cfe0f5;"></i>
<i class="mz" style="left:173px;top:502px;width:12px;height:12px;background:#e9f0fa;"></i>
<i class="mz" style="left:139px;top:514px;width:10px;height:12px;background:#f3f7fc;"></i>
<i class="mz" style="left:149px;top:514px;width:12px;height:12px;background:#e6eef9;"></i>
<i class="mz" style="left:161px;top:514px;width:12px;height:12px;background:#eaf1fb;"></i>
<i class="mz" style="left:173px;top:514px;width:12px;height:12px;background:#f6f9fd;"></i>
<i class="mz" style="left:133px;top:539px;width:16px;height:12px;background:#e6eef9;"></i>
<i class="mz" style="left:149px;top:539px;width:12px;height:12px;background:#c9ddf4;"></i>
<i class="mz" style="left:161px;top:539px;width:12px;height:12px;background:#dde8f8;"></i>
<i class="mz" style="left:173px;top:539px;width:17px;height:12px;background:#e9f0fa;"></i>
<i class="mz" style="left:133px;top:551px;width:16px;height:12px;background:#eef3fb;"></i>
<i class="mz" style="left:149px;top:551px;width:12px;height:12px;background:#dfe9f8;"></i>
<i class="mz" style="left:161px;top:551px;width:12px;height:12px;background:#e6eef9;"></i>
<i class="mz" style="left:173px;top:551px;width:17px;height:12px;background:#f1f5fc;"></i>
<i class="mz" style="left:139px;top:587px;width:10px;height:12px;background:#dde8f8;"></i>
<i class="mz" style="left:149px;top:587px;width:12px;height:12px;background:#d6e4f7;"></i>
<i class="mz" style="left:161px;top:587px;width:12px;height:12px;background:#e3ecf9;"></i>
<i class="mz" style="left:173px;top:587px;width:12px;height:12px;background:#c3d9f3;"></i>
<i class="mz" style="left:185px;top:587px;width:5px;height:12px;background:#dde8f8;"></i>
<i class="mz" style="left:139px;top:599px;width:10px;height:11px;background:#eef3fb;"></i>
<i class="mz" style="left:149px;top:599px;width:12px;height:11px;background:#e9f0fa;"></i>
<i class="mz" style="left:161px;top:599px;width:12px;height:11px;background:#eef3fb;"></i>
<i class="mz" style="left:173px;top:599px;width:12px;height:11px;background:#e3ecf9;"></i>
<i class="mz" style="left:185px;top:599px;width:5px;height:11px;background:#eef3fb;"></i>
<i class="mz" style="left:151px;top:632px;width:10px;height:11px;background:#c9ddf4;"></i>
<i class="mz" style="left:161px;top:632px;width:12px;height:11px;background:#c0d8f3;"></i>
<i class="mz" style="left:173px;top:632px;width:13px;height:11px;background:#dde8f8;"></i>
<i class="mz" style="left:377px;top:226px;width:12px;height:13px;background:#d4d4d4;"></i>
<i class="mz" style="left:389px;top:226px;width:12px;height:13px;background:#dedede;"></i>
<i class="mz" style="left:426px;top:226px;width:11px;height:13px;background:#d0d0d0;"></i>
<i class="mz" style="left:377px;top:239px;width:24px;height:2px;background:#f2f2f2;"></i>
<i class="mz" style="left:426px;top:239px;width:11px;height:2px;background:#f2f2f2;"></i>
<i class="mz" style="left:414px;top:227px;width:12px;height:11px;background:#f2f2f2;opacity:.55"></i>
<i class="mz" style="left:402px;top:272px;width:12px;height:15px;background:#ececec;"></i>
<i class="mz" style="left:414px;top:272px;width:12px;height:15px;background:#e6e6e6;"></i>
<i class="mz" style="left:426px;top:272px;width:12px;height:15px;background:#e3e3e3;"></i>
<i class="mz" style="left:438px;top:272px;width:12px;height:15px;background:#e9e9e9;"></i>
<i class="mz" style="left:424px;top:323px;width:14px;height:12px;background:#e4e4e4;"></i>
<i class="mz" style="left:438px;top:323px;width:12px;height:12px;background:#d9d9d9;"></i>
<i class="mz" style="left:426px;top:371px;width:11px;height:12px;background:#ececec;"></i>
<i class="mz" style="left:437px;top:371px;width:12px;height:12px;background:#d6d6d6;"></i>
<i class="mz" style="left:425px;top:417px;width:12px;height:12px;background:#e9e9e9;"></i>
<i class="mz" style="left:437px;top:417px;width:12px;height:12px;background:#dcdcdc;"></i>
<i class="mz" style="left:425px;top:455px;width:12px;height:23px;background:#ededed;"></i>
<i class="mz" style="left:437px;top:455px;width:12px;height:23px;background:#e2e2e2;"></i>
<i class="mz" style="left:425px;top:502px;width:12px;height:12px;background:#e6e6e6;"></i>
<i class="mz" style="left:437px;top:502px;width:12px;height:12px;background:#dedede;"></i>
<i class="mz" style="left:430px;top:539px;width:8px;height:24px;background:#efefef;"></i>
<i class="mz" style="left:438px;top:539px;width:11px;height:24px;background:#e6e6e6;"></i>
<i class="mz" style="left:435px;top:587px;width:14px;height:12px;background:#dadada;"></i>
<div class="abs" style="left:1133px;top:0;width:13px;height:643px;background:#f1f1f1"><i class="abs" style="left:0;top:0;width:13px;height:13px;background:#ececec"></i><i class="abs" style="left:3px;top:4px;border:4px solid transparent;border-bottom:5px solid #a3a3a3;border-top-width:0;width:0;height:0"></i><i class="abs" style="left:1px;top:13px;width:10px;height:310px;background:#c1c1c1"></i><i class="abs" style="left:0;top:630px;width:13px;height:13px;background:#ececec"></i><i class="abs" style="left:2px;top:634px;border:4px solid transparent;border-top:5px solid #111;border-bottom-width:0;width:0;height:0"></i></div>
</div>
</body>
</html>
